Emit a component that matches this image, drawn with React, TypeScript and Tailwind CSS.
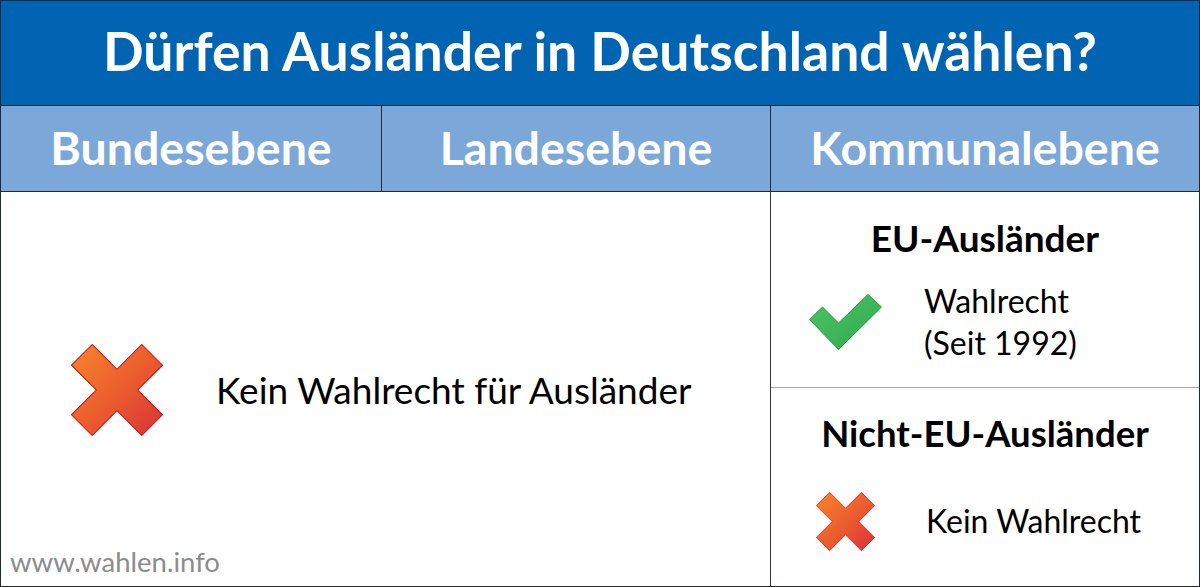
import React from "react";

const font = { fontFamily: "Lato, 'Open Sans', sans-serif" };

function CrossIcon({ size }: { size: number }) {
	const id = `cross-grad-${size}`;
	return (
		<svg width={size} height={size} viewBox="0 0 91 91">
			<defs>
				<linearGradient id={id} x1="0" y1="0" x2="1" y2="1">
					<stop offset="0%" stopColor="#f9852a" />
					<stop offset="55%" stopColor="#ea5a2e" />
					<stop offset="100%" stopColor="#d8303a" />
				</linearGradient>
			</defs>
			<polygon
				points="0.5,21 21,0.5 45.5,25 70,0.5 90.5,21 66,45.5 90.5,70 70,90.5 45.5,66 21,90.5 0.5,70 25,45.5"
				fill={`url(#${id})`}
				stroke="#c3101a"
				strokeWidth="1"
				strokeLinejoin="miter"
			/>
		</svg>
	);
}

function CheckIcon() {
	return (
		<svg width="73" height="56" viewBox="0 0 73 56">
			<defs>
				<linearGradient id="check-grad" x1="0" y1="0" x2="1" y2="1">
					<stop offset="0%" stopColor="#4cc466" />
					<stop offset="100%" stopColor="#30a84d" />
				</linearGradient>
			</defs>
			<polygon
				points="13.5,13 29.5,29 59,0.5 72.5,13 29.5,55.5 0.5,25.5"
				fill="url(#check-grad)"
				stroke="#279a3e"
				strokeWidth="1"
			/>
		</svg>
	);
}

export default function App() {
	return (
		<div className="w-[1200px] h-[587px] bg-white" style={font}>
			<div className="flex h-full w-full flex-col border border-[#1e2a38]">
				{/* title */}
				<div className="flex h-[104px] shrink-0 items-center justify-center bg-[#0064b3] pb-[4px]">
					<h1 className="text-[53.5px] font-bold leading-none text-white">
						Dürfen Ausländer in Deutschland wählen?
					</h1>
				</div>

				{/* column heads */}
				<div className="grid h-[87px] shrink-0 grid-cols-[381px_389px_1fr] border-y border-[#1e2a38] bg-[#7ca7d9] text-white">
					<div className="flex items-center justify-center border-r border-[#1e2a38] pb-[2px] text-[46.5px] font-bold">
						Bundesebene
					</div>
					<div className="flex items-center justify-center border-r border-[#1e2a38] pb-[2px] text-[46.5px] font-bold">
						Landesebene
					</div>
					<div className="flex items-center justify-center pb-[2px] text-[46.5px] font-bold">
						Kommunalebene
					</div>
				</div>

				{/* body */}
				<div className="grid flex-1 grid-cols-[769px_1fr] text-black">
					<div className="relative flex items-center pl-[70px] pt-[2px]">
						<CrossIcon size={92} />
						<span className="ml-[53px] text-[37px]">Kein Wahlrecht für Ausländer</span>
						<span className="absolute bottom-[4px] left-[9px] text-[27.5px] text-[#8c8c8c]">
							www.wahlen.info
						</span>
					</div>

					<div className="flex flex-col border-l border-[#333]">
						<div className="flex h-[196px] flex-col border-b border-[#a8a8a8]">
							<div className="pt-[27px] text-center text-[37px] font-bold leading-none">EU-Ausländer</div>
							<div className="mt-[24px] flex items-center pl-[38px]">
								<CheckIcon />
								<div className="ml-[42px] text-[32px] leading-[42px]">
									<div>Wahlrecht</div>
									<div>(Seit 1992)</div>
								</div>
							</div>
						</div>
						<div className="flex flex-1 flex-col">
							<div className="pt-[27px] text-center text-[36.5px] font-bold leading-none">
								Nicht-EU-Ausländer
							</div>
							<div className="mt-[40px] flex items-center pl-[45px]">
								<CrossIcon size={59} />
								<span className="ml-[51px] text-[32px] leading-none">Kein Wahlrecht</span>
							</div>
						</div>
					</div>
				</div>
			</div>
		</div>
	);
}
